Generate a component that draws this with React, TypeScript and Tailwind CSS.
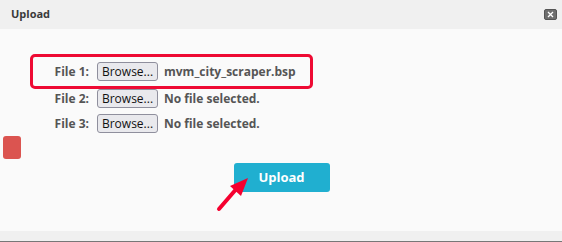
import React from 'react';

function FileRow({ label, name, boxed }: { label: string; name: string; boxed?: boolean }) {
  return (
    <div className={`flex items-center ${boxed ? 'h-full' : 'h-[19px]'}`}>
      <span className="w-[56px] text-right text-[12px] font-bold text-[#555]">{label}</span>
      <button className="ml-[8px] h-[19px] w-[61px] rounded-[3px] border border-[#8f8f9d] bg-[#e9e9ed] text-[12px] leading-none text-[#111]">
        Browse...
      </button>
      <span className="ml-[6px] text-[12px] font-bold text-[#555]">{name}</span>
    </div>
  );
}

export default function App() {
  return (
    <div className="relative flex h-[242px] w-[562px] flex-col bg-[#fafafa] font-['Open_Sans',sans-serif]">
      {/* Title bar */}
      <div className="flex h-[29px] items-center justify-between bg-[#f0f0f0] pl-[11px] pr-[5px]">
        <span className="text-[11px] font-bold text-[#3a3a3a]">Upload</span>
        <div className="flex h-[11px] w-[13px] items-center justify-center rounded-[2px] border border-[#555] bg-[#6e6e6e]">
          <svg width="7" height="7" viewBox="0 0 7 7">
            <path d="M1 1 L6 6 M6 1 L1 6" stroke="#fff" strokeWidth="1.3" />
          </svg>
        </div>
      </div>

      {/* Body */}
      <div className="flex flex-1 flex-col pt-[25px]">
        <div className="ml-[30px] h-[35px] w-[283px] rounded-[5px] border-[3px] border-[#ee0a33]">
          <FileRow label="File 1:" name="mvm_city_scraper.bsp" boxed />
        </div>
        <div className="ml-[33px]">
          <FileRow label="File 2:" name="No file selected." />
        </div>
        <div className="ml-[33px] mt-[6px]">
          <FileRow label="File 3:" name="No file selected." />
        </div>
        <div className="ml-[3px] mt-[3px] h-[23px] w-[18px] rounded-[3px] bg-[#db5450]" />
        <div className="mt-[4px] flex justify-center">
          <button className="ml-[1px] h-[29px] w-[96px] rounded-[3px] bg-[#20afd0] text-[13px] font-bold text-white">
            Upload
          </button>
        </div>
      </div>

      {/* Footer */}
      <div className="h-[11px] border-b border-[#777] bg-[#f0f0f0]" />

      {/* Annotation arrow */}
      <svg className="absolute left-[214px] top-[174px]" width="40" height="40" viewBox="0 0 40 40">
        <path d="M5 35 L24 13" stroke="#f5002f" strokeWidth="4" strokeLinecap="round" />
        <path d="M34 4 L16 12 L27 22 Z" fill="#f5002f" />
      </svg>
    </div>
  );
}
